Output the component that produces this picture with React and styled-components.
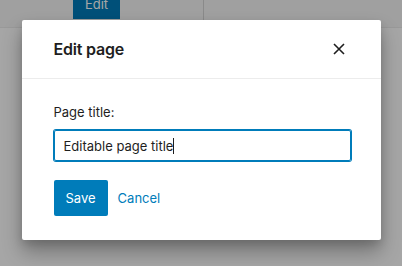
import React from 'react'
import styled, { createGlobalStyle } from 'styled-components'

const GlobalStyle = createGlobalStyle`
  html, body {
    margin: 0;
    padding: 0;
    width: 402px;
    height: 266px;
    overflow: hidden;
    background: #fff;
    font-family: Inter, "Liberation Sans", sans-serif;
    -webkit-font-smoothing: antialiased;
  }
`

const Page = styled.div`
  position: relative;
  width: 402px;
  height: 266px;
  overflow: hidden;
  background: #ffffff;
`

const TopBar = styled.div`
  height: 28px;
  display: flex;
  align-items: flex-end;
  background: #f6f6f6;
  border-bottom: 1px solid #ececec;
  box-sizing: border-box;
`

const BarCell = styled.div`
  width: ${props => props.width || 'auto'};
  height: 100%;
  display: flex;
  align-items: flex-end;
  padding-left: ${props => props.padLeft || '0px'};
  padding-bottom: 8px;
  box-sizing: border-box;
  border-right: ${props => props.divider ? '1px solid #d4d4d4' : 'none'};
`

const GhostButton = styled.div`
  height: 30px;
  width: 47px;
  background: #007cba;
  color: #ffffff;
  font-size: 13px;
  display: flex;
  align-items: center;
  justify-content: center;
`

const Overlay = styled.div`
  position: absolute;
  inset: 0;
  background: rgba(0, 0, 0, 0.35);
  display: flex;
  justify-content: center;
  align-items: flex-start;
  padding-top: 20px;
  box-sizing: border-box;
`

const Modal = styled.div`
  width: 359px;
  height: 220px;
  background: #ffffff;
  border-radius: 2px;
  box-shadow: 0 12px 20px rgba(0, 0, 0, 0.3), 0 4px 8px rgba(0, 0, 0, 0.12);
  display: flex;
  flex-direction: column;
`

const Header = styled.div`
  height: 59px;
  padding: 0 32px;
  display: flex;
  align-items: center;
  justify-content: space-between;
  border-bottom: 1px solid #ececec;
`

const Title = styled.h1`
  margin: 0;
  font-size: 16px;
  font-weight: 600;
  color: #1e1e1e;
  letter-spacing: -0.2px;
`

const CloseButton = styled.button`
  width: 24px;
  height: 24px;
  margin-right: -2px;
  padding: 0;
  border: none;
  background: none;
  display: flex;
  align-items: center;
  justify-content: center;
  color: #1e1e1e;
`

const Body = styled.div`
  padding: 24px 32px 24px;
  display: flex;
  flex-direction: column;
`

const Label = styled.label`
  font-size: 13px;
  line-height: 18px;
  color: #1e1e1e;
  margin-bottom: 9px;
`

const Field = styled.div`
  height: 31px;
  width: 297px;
  box-sizing: border-box;
  border: 1px solid #007cba;
  box-shadow: 0 0 0 1px #007cba;
  border-radius: 2px;
  padding: 0 9px;
  display: flex;
  align-items: center;
  font-size: 13px;
  color: #1e1e1e;
`

const Caret = styled.span`
  display: inline-block;
  width: 1px;
  height: 16px;
  background: #1e1e1e;
`

const Actions = styled.div`
  margin-top: 19px;
  display: flex;
  align-items: center;
  gap: 4px;
`

const Button = styled.button`
  height: 36px;
  padding: 0 ${props => props.primary ? '12px' : '6px'};
  border: none;
  border-radius: 2px;
  font-family: inherit;
  font-size: 13px;
  background: ${props => props.primary ? '#007cba' : 'transparent'};
  color: ${props => props.primary ? '#ffffff' : '#007cba'};
`

const CloseIcon = () => (
  <svg width="12" height="12" viewBox="0 0 12 12">
    <path d="M1 1 L11 11 M11 1 L1 11" stroke="currentColor" strokeWidth="1.6" fill="none" />
  </svg>
)

const App = () => (
  <Page>
    <GlobalStyle />
    <TopBar>
      <BarCell width="204px" padLeft="73px" divider>
        <GhostButton>Edit</GhostButton>
      </BarCell>
    </TopBar>
    <Overlay>
      <Modal>
        <Header>
          <Title>Edit page</Title>
          <CloseButton aria-label="Close">
            <CloseIcon />
          </CloseButton>
        </Header>
        <Body>
          <Label>Page title:</Label>
          <Field>
            Editable page title<Caret />
          </Field>
          <Actions>
            <Button primary>Save</Button>
            <Button>Cancel</Button>
          </Actions>
        </Body>
      </Modal>
    </Overlay>
  </Page>
)

export default App
